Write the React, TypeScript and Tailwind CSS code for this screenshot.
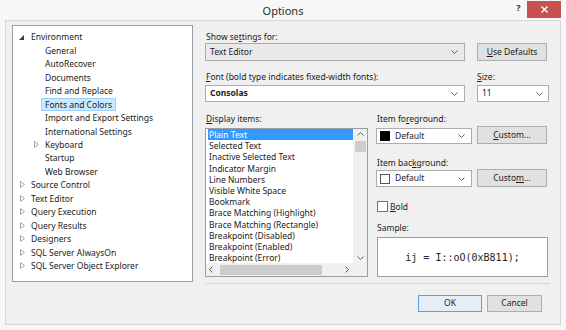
import React from "react";

const Chevron = ({ dir = "down" }: { dir?: "down" | "up" | "left" | "right" }) => {
  const pts =
    dir === "down"
      ? "0.5,0.5 3.5,3.5 6.5,0.5"
      : dir === "up"
      ? "0.5,3.5 3.5,0.5 6.5,3.5"
      : dir === "left"
      ? "3.5,0.5 0.5,3.5 3.5,6.5"
      : "0.5,0.5 3.5,3.5 0.5,6.5";
  const horiz = dir === "down" || dir === "up";
  return (
    <svg width={horiz ? 7 : 4} height={horiz ? 4 : 7} viewBox={horiz ? "0 0 7 4" : "0 0 4 7"}>
      <polyline points={pts} fill="none" stroke="#606060" strokeWidth="1" />
    </svg>
  );
};

type Node = { label: string; level: number; exp?: "open" | "closed"; sel?: boolean };

const tree: Node[] = [
  { label: "Environment", level: 0, exp: "open" },
  { label: "General", level: 1 },
  { label: "AutoRecover", level: 1 },
  { label: "Documents", level: 1 },
  { label: "Find and Replace", level: 1 },
  { label: "Fonts and Colors", level: 1, sel: true },
  { label: "Import and Export Settings", level: 1 },
  { label: "International Settings", level: 1 },
  { label: "Keyboard", level: 1, exp: "closed" },
  { label: "Startup", level: 1 },
  { label: "Web Browser", level: 1 },
  { label: "Source Control", level: 0, exp: "closed" },
  { label: "Text Editor", level: 0, exp: "closed" },
  { label: "Query Execution", level: 0, exp: "closed" },
  { label: "Query Results", level: 0, exp: "closed" },
  { label: "Designers", level: 0, exp: "closed" },
  { label: "SQL Server AlwaysOn", level: 0, exp: "closed" },
  { label: "SQL Server Object Explorer", level: 0, exp: "closed" },
];

const displayItems = [
  "Plain Text",
  "Selected Text",
  "Inactive Selected Text",
  "Indicator Margin",
  "Line Numbers",
  "Visible White Space",
  "Bookmark",
  "Brace Matching (Highlight)",
  "Brace Matching (Rectangle)",
  "Breakpoint (Disabled)",
  "Breakpoint (Enabled)",
  "Breakpoint (Error)",
];

export default function App() {
  return (
    <div className="w-[566px] h-[330px] bg-[#f7f7f7] flex flex-col overflow-hidden font-['Noto_Sans',sans-serif] text-[8.5px] text-[#1b1b1b]">
      {/* title bar */}
      <div className="h-[20px] flex shrink-0">
        <div className="w-[56px]" />
        <div className="flex-1 text-center text-[11px] leading-[22px] text-[#2b2b2b]">Options</div>
        <div className="w-[56px] flex items-start">
          <div className="w-[17px] pt-[2px] text-[9px] font-bold leading-[12px] text-[#333] text-center">?</div>
          <div className="w-[34px] h-[17px] mt-[1px] bg-[#c75050] flex items-center justify-center">
            <svg width="7" height="7" viewBox="0 0 7 7">
              <path d="M0.5 0.5 L6.5 6.5 M6.5 0.5 L0.5 6.5" stroke="#ffffff" strokeWidth="1.4" />
            </svg>
          </div>
        </div>
      </div>

      {/* client */}
      <div className="flex-1 mx-[5px] mb-[5px] bg-[#f0f0f0] border border-[#d6d6d6] pl-[6px] pt-[4px] flex gap-[12px]">
        {/* tree */}
        <div className="w-[181px] h-[257px] bg-white border border-[#9a9da3] pt-[4px] shrink-0">
          {tree.map((n) => (
            <div
              key={n.label}
              className={`h-[13.47px] flex items-center ${n.level === 0 ? "pl-[1px]" : "pl-[15px]"}`}
            >
              <div className="w-[13px] h-full flex items-center justify-center">
                {n.exp === "open" && (
                  <svg width="5" height="5" viewBox="0 0 5 5" className="ml-[1px] mt-[1px]">
                    <polygon points="5,0 5,5 0,5" fill="#3a3a3a" />
                  </svg>
                )}
                {n.exp === "closed" && (
                  <svg width="5" height="7" viewBox="0 0 5 7" className="ml-[4px]">
                    <polygon points="0.5,0.5 4.5,3.5 0.5,6.5" fill="none" stroke="#a6a6a6" strokeWidth="1" />
                  </svg>
                )}
              </div>
              <span
                className={`px-[3px] leading-[11px] border whitespace-nowrap ${
                  n.sel ? "bg-[#cce8ff] border-[#99d1ff]" : "border-transparent"
                }`}
              >
                {n.label}
              </span>
            </div>
          ))}
        </div>

        {/* right column */}
        <div className="w-[345px] flex flex-col">
          <div className="mt-[6px] leading-[11px] pl-[1px]">
            Show se<u>t</u>tings for:
          </div>
          <div className="mt-[1px] flex gap-[12px]">
            <div className="w-[260px] h-[18px] bg-[#e9e9e9] border border-[#acacac] flex items-center justify-between pl-[4px] pr-[6px]">
              <span>Text Editor</span>
              <Chevron />
            </div>
            <div className="w-[70px] h-[18px] bg-[#e1e1e1] border border-[#adadad] flex items-center justify-center">
              <span>
                <u>U</u>se Defaults
              </span>
            </div>
          </div>

          <div className="mt-[10px] flex gap-[12px] leading-[11px]">
            <div className="w-[260px] pl-[1px]">
              <u>F</u>ont (bold type indicates fixed-width fonts):
            </div>
            <div>
              <u>S</u>ize:
            </div>
          </div>
          <div className="mt-[3px] flex gap-[12px]">
            <div className="w-[260px] h-[17px] bg-white border border-[#acacac] flex items-center justify-between pl-[4px] pr-[6px]">
              <span className="font-bold">Consolas</span>
              <Chevron />
            </div>
            <div className="w-[72px] h-[17px] bg-white border border-[#acacac] flex items-center justify-between pl-[4px] pr-[5px]">
              <span>11</span>
              <Chevron />
            </div>
          </div>

          <div className="mt-[11px] flex gap-[9px]">
            {/* display items */}
            <div className="w-[163px] flex flex-col">
              <div className="leading-[11px] pl-[1px]">
                <u>D</u>isplay items:
              </div>
              <div className="mt-[4px] h-[149px] bg-white border border-[#9a9da3] flex flex-col">
                <div className="flex-1 flex min-h-0">
                  <div className="flex-1 pl-[2px] overflow-hidden">
                    {displayItems.map((d, i) => (
                      <div
                        key={d}
                        className={`h-[11.2px] leading-[11.2px] pl-[1px] whitespace-nowrap ${
                          i === 0 ? "bg-[#3399ff] text-white" : ""
                        }`}
                      >
                        {d}
                      </div>
                    ))}
                  </div>
                  <div className="w-[14px] bg-[#f0f0f0] flex flex-col items-center">
                    <div className="h-[10px] flex items-center">
                      <Chevron dir="up" />
                    </div>
                    <div className="w-[11px] h-[11px] mt-[2px] bg-[#cdcdcd]" />
                    <div className="flex-1" />
                    <div className="h-[10px] flex items-center">
                      <Chevron dir="down" />
                    </div>
                  </div>
                </div>
                <div className="h-[13px] flex bg-[#f0f0f0]">
                  <div className="flex-1 flex items-center pl-[3px] pr-[4px]">
                    <Chevron dir="left" />
                    <div className="ml-[7px] w-[102px] h-[10px] bg-[#cdcdcd]" />
                    <div className="flex-1" />
                    <Chevron dir="right" />
                  </div>
                  <div className="w-[14px] bg-[#f0f0f0]" />
                </div>
              </div>
            </div>

            {/* item colors */}
            <div className="w-[171px] flex flex-col">
              <div className="leading-[11px]">
                Item fo<u>r</u>eground:
              </div>
              <div className="mt-[2px] flex items-end gap-[5px] -ml-[1px]">
                <div className="w-[96px] h-[16px] bg-white border border-[#acacac] flex items-center pl-[3px] pr-[6px]">
                  <div className="w-[10px] h-[10px] bg-black" />
                  <span className="ml-[5px] flex-1">Default</span>
                  <Chevron />
                </div>
                <div className="w-[70px] h-[18px] bg-[#e1e1e1] border border-[#adadad] flex items-center justify-center">
                  <span>
                    <u>C</u>ustom...
                  </span>
                </div>
              </div>

              <div className="mt-[13px] leading-[11px]">
                Item bac<u>k</u>ground:
              </div>
              <div className="mt-[1px] flex items-end gap-[5px] -ml-[1px]">
                <div className="w-[96px] h-[17px] bg-white border border-[#acacac] flex items-center pl-[3px] pr-[6px]">
                  <div className="w-[10px] h-[10px] bg-white border border-[#555]" />
                  <span className="ml-[5px] flex-1">Default</span>
                  <Chevron />
                </div>
                <div className="w-[70px] h-[18px] bg-[#e1e1e1] border border-[#adadad] flex items-center justify-center">
                  <span>
                    Custo<u>m</u>...
                  </span>
                </div>
              </div>

              <div className="mt-[14px] flex items-center">
                <div className="w-[11px] h-[11px] bg-white border border-[#707070]" />
                <span className="ml-[2px] leading-[11px]">
                  <u>B</u>old
                </span>
              </div>

              <div className="mt-[10px] leading-[11px]">Sample:</div>
              <div className="mt-[4px] w-[171px] h-[40px] bg-white border border-[#9a9da3] flex items-center justify-center">
                <span className="font-['DejaVu_Sans_Mono',monospace] text-[10px] text-[#1e1e1e] whitespace-pre">
                  ij = I::oO(0xB811);
                </span>
              </div>
            </div>
          </div>

          <div className="mt-[6px] h-px bg-[#d5d5d5]" />
          <div className="mt-[11px] flex justify-end gap-[5px] pr-[8px]">
            <div className="w-[64px] h-[17px] bg-[#e5eef7] border border-[#5c9fd9] flex items-center justify-center">
              OK
            </div>
            <div className="w-[55px] h-[17px] bg-[#e1e1e1] border border-[#adadad] flex items-center justify-center">
              Cancel
            </div>
          </div>
        </div>
      </div>
    </div>
  );
}
